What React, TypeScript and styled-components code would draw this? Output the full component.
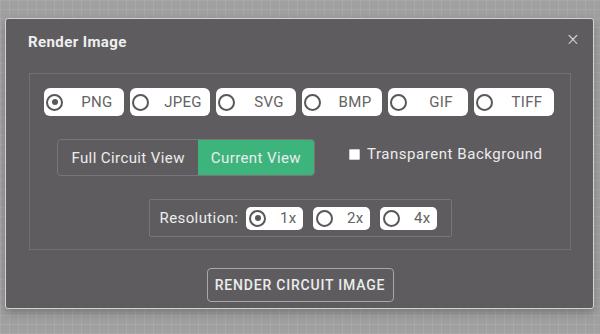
import React, { useState } from "react";
import styled, { createGlobalStyle } from "styled-components";

const Global = createGlobalStyle`
  html, body {
    margin: 0;
    padding: 0;
    height: 334px;
    overflow: hidden;
  }
  body {
    font-family: Roboto, "Liberation Sans", Arial, sans-serif;
    background-color: #a0a0a0;
    background-image:
      repeating-linear-gradient(0deg, rgba(255,255,255,0.08) 0 1px, transparent 1px 9px),
      repeating-linear-gradient(90deg, rgba(255,255,255,0.08) 0 1px, transparent 1px 9px);
  }
  #root {
    padding: 18px 0 0 5px;
  }
`;

const Modal = styled.div`
  box-sizing: border-box;
  width: 589px;
  height: 291px;
  background: #5f5c60;
  border: 1px solid #d2d2d2;
  border-radius: 3px;
  padding: 0 22px 0 23px;
  display: flex;
  flex-direction: column;
  box-shadow: 0 4px 10px rgba(0, 0, 0, 0.25);
`;

const Header = styled.div`
  height: 45px;
  display: flex;
  align-items: center;
  justify-content: space-between;
`;

const Title = styled.h2`
  margin: 0 0 0 -1px;
  font-size: 15px;
  font-weight: 700;
  color: #efefef;
  letter-spacing: 0.4px;
`;

const Close = styled.button`
  margin-right: -9px;
  margin-top: -4px;
  background: none;
  border: none;
  padding: 0;
  color: #e6e6e6;
  font-size: 17px;
  line-height: 1;
  font-family: "DejaVu Sans", sans-serif;
  font-weight: 300;
  cursor: pointer;
`;

const Panel = styled.div`
  box-sizing: border-box;
  margin-top: 9px;
  height: 177px;
  border: 1px solid #737075;
  padding: 14px 0 12px;
  display: flex;
  flex-direction: column;
  align-items: center;
  gap: 23px;
`;

const PillRow = styled.div`
  display: flex;
  gap: 6px;
  margin-left: -2px;
`;

const Pill = styled.label<{ $small?: boolean }>`
  box-sizing: border-box;
  width: ${(p) => (p.$small ? 57 : 80)}px;
  height: ${(p) => (p.$small ? 23 : 28)}px;
  background: #ffffff;
  border-radius: ${(p) => (p.$small ? 5 : 6)}px;
  display: flex;
  align-items: center;
  padding-left: ${(p) => (p.$small ? 3 : 2)}px;
  cursor: pointer;
`;

const Radio = styled.span<{ $checked: boolean }>`
  box-sizing: border-box;
  flex: none;
  width: 17px;
  height: 17px;
  border-radius: 50%;
  border: 2.8px solid #585858;
  display: flex;
  align-items: center;
  justify-content: center;
  &::after {
    content: "";
    width: 6px;
    height: 6px;
    border-radius: 50%;
    background: #585858;
    display: ${(p) => (p.$checked ? "block" : "none")};
  }
`;

const PillText = styled.span`
  flex: 1;
  text-align: center;
  font-size: 15px;
  letter-spacing: 0.3px;
  color: #636363;
  padding-left: 7px;
`;

const MidRow = styled.div`
  display: flex;
  align-items: flex-start;
  gap: 34px;
  height: 37px;
`;

const Toggle = styled.div`
  box-sizing: border-box;
  display: flex;
  height: 37px;
  border: 1px solid #77747a;
  border-radius: 4px;
  overflow: hidden;
`;

const ToggleButton = styled.button<{ $active: boolean }>`
  border: none;
  margin: 0;
  padding: 0 13px;
  height: 100%;
  font-family: inherit;
  font-size: 15px;
  letter-spacing: 0.4px;
  color: #ececec;
  background: ${(p) => (p.$active ? "#3cb47c" : "transparent")};
  cursor: pointer;
`;

const CheckLabel = styled.label`
  display: flex;
  align-items: center;
  gap: 7px;
  margin-top: 6px;
  font-size: 15px;
  color: #ececec;
  letter-spacing: 0.55px;
  cursor: pointer;
`;

const CheckBox = styled.span`
  box-sizing: border-box;
  width: 11px;
  height: 11px;
  background: #ffffff;
  border: 1px solid #cfcfcf;
  border-radius: 1px;
`;

const ResBox = styled.div`
  box-sizing: border-box;
  height: 38px;
  width: 303px;
  border: 1px solid #77747a;
  border-radius: 2px;
  display: flex;
  align-items: center;
  padding: 0 0 0 10px;
`;

const ResLabel = styled.span`
  font-size: 15px;
  color: #ececec;
  letter-spacing: 0.4px;
  margin-right: 8px;
`;

const ResPills = styled.div`
  display: flex;
  gap: 10px;
`;

const Footer = styled.div`
  margin-top: 18px;
  display: flex;
  justify-content: center;
`;

const RenderButton = styled.button`
  box-sizing: border-box;
  width: 187px;
  height: 34px;
  background: transparent;
  border: 1px solid #a9a7ab;
  border-radius: 4px;
  color: #ececec;
  font-family: inherit;
  font-size: 14px;
  font-weight: 500;
  letter-spacing: 0.8px;
  cursor: pointer;
  padding: 0;
`;

const formats = ["PNG", "JPEG", "SVG", "BMP", "GIF", "TIFF"];
const resolutions = ["1x", "2x", "4x"];

export default function App() {
  const [format, setFormat] = useState("PNG");
  const [view, setView] = useState("current");
  const [res, setRes] = useState("1x");

  return (
    <>
      <Global />
      <Modal>
        <Header>
          <Title>Render Image</Title>
          <Close aria-label="Close">×</Close>
        </Header>
        <Panel>
          <PillRow>
            {formats.map((f) => (
              <Pill key={f} onClick={() => setFormat(f)}>
                <Radio $checked={format === f} />
                <PillText>{f}</PillText>
              </Pill>
            ))}
          </PillRow>
          <MidRow>
            <Toggle>
              <ToggleButton $active={view === "full"} onClick={() => setView("full")}>
                Full Circuit View
              </ToggleButton>
              <ToggleButton $active={view === "current"} onClick={() => setView("current")}>
                Current View
              </ToggleButton>
            </Toggle>
            <CheckLabel>
              <CheckBox />
              Transparent Background
            </CheckLabel>
          </MidRow>
          <ResBox>
            <ResLabel>Resolution:</ResLabel>
            <ResPills>
              {resolutions.map((r) => (
                <Pill key={r} $small onClick={() => setRes(r)}>
                  <Radio $checked={res === r} />
                  <PillText>{r}</PillText>
                </Pill>
              ))}
            </ResPills>
          </ResBox>
        </Panel>
        <Footer>
          <RenderButton>RENDER CIRCUIT IMAGE</RenderButton>
        </Footer>
      </Modal>
    </>
  );
}
